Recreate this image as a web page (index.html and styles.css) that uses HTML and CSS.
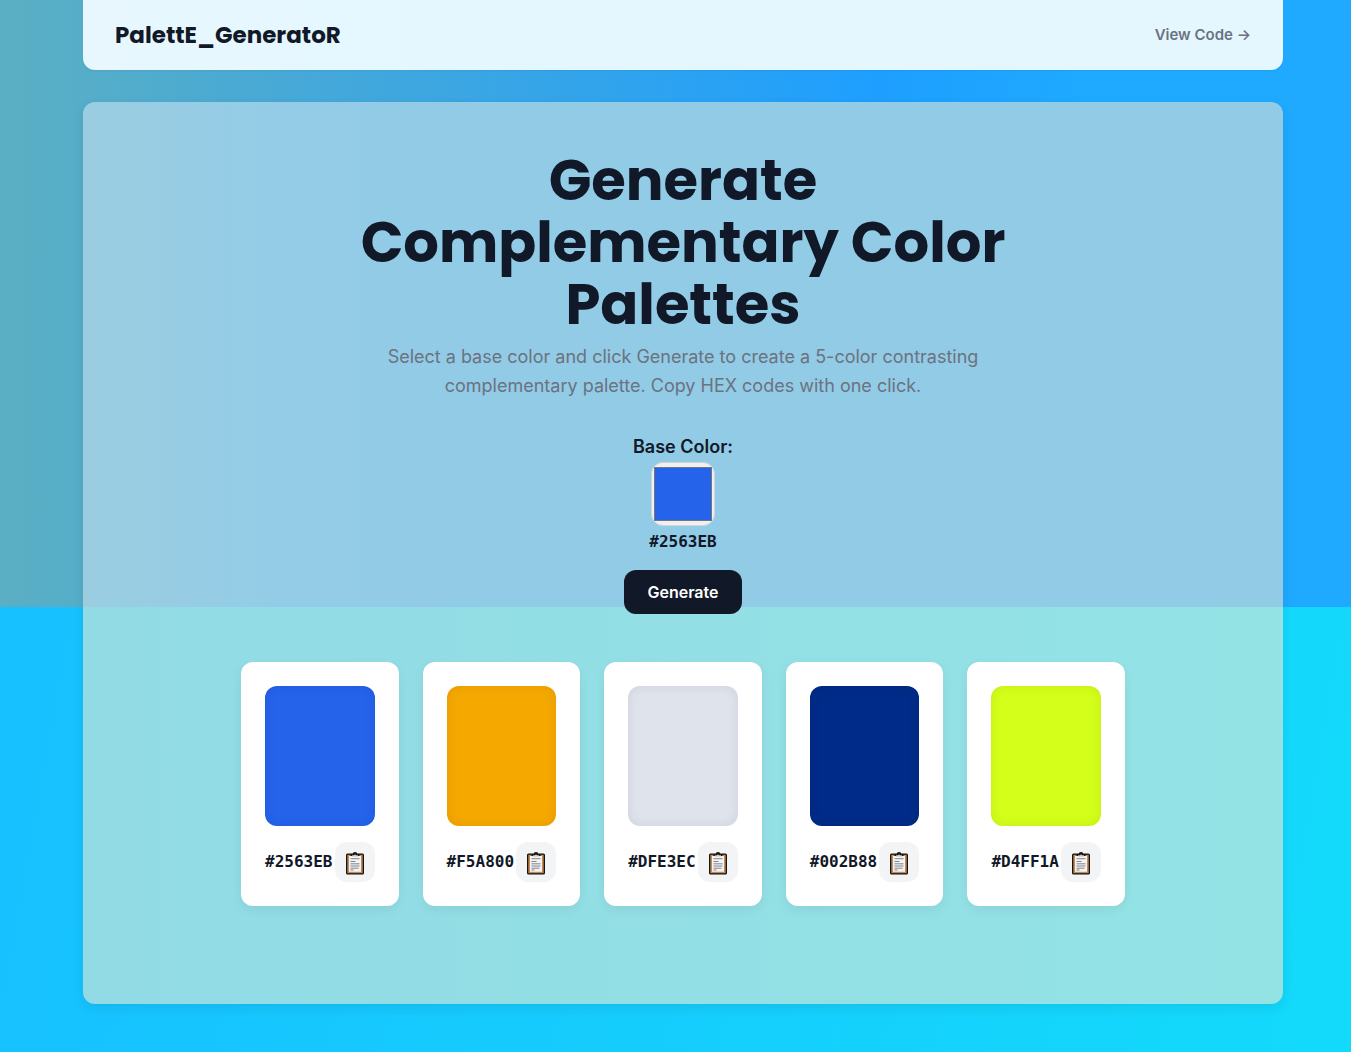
FILE: index.html
```html
<!DOCTYPE html>
<html lang="en">
<head>
<meta charset="utf-8">
<meta name="viewport" content="width=device-width, initial-scale=1">
<title>PalettE_GeneratoR</title>
<link rel="stylesheet" href="styles.css">
</head>
<body>
<svg class="sprite" aria-hidden="true">
  <symbol id="clipboard" viewBox="0 0 20 24">
    <rect x="1" y="2.500" width="18" height="21" rx="1.500" fill="#17130f"/>
    <rect x="2.300" y="3.800" width="15.400" height="18.400" fill="#c08a55"/>
    <rect x="4" y="5" width="12" height="15.800" fill="#f3f2f4"/>
    <path d="M5.500 5V3.200h2.200a2.300 2.300 0 0 1 4.600 0h2.200V5z" fill="#17130f"/>
    <path d="M7 5.600V4.200h1.800a1.300 1.300 0 0 1 2.400 0H13v1.400z" fill="#c9c4c1"/>
    <path d="M5.500 7.700h9M5.500 10.500h5M5.500 12.800h9M5.500 15h9M5.500 17.200h8M5.500 19h3" stroke="#85858a" stroke-width="1"/>
  </symbol>
</svg>
<div class="page">
  <header class="header">
    <span class="logo">PalettE_GeneratoR</span>
    <a class="code-link" href="#code">View Code →</a>
  </header>
  <main class="panel">
    <section class="hero">
      <h1 class="title">Generate Complementary Color Palettes</h1>
      <p class="lead">Select a base color and click Generate to create a 5-color contrasting complementary palette. Copy HEX codes with one click.</p>
    </section>
    <section class="controls">
      <label class="label" for="base">Base Color:</label>
      <input class="picker" id="base" type="color" value="#2563eb">
      <span class="hex current">#2563EB</span>
      <button class="generate" type="button">Generate</button>
    </section>
    <section class="palette">
      <article class="card"><div class="swatch blue"></div><div class="row"><span class="hex">#2563EB</span><button class="copy" type="button" aria-label="Copy #2563EB"><svg class="icon"><use href="#clipboard"/></svg></button></div></article>
      <article class="card"><div class="swatch amber"></div><div class="row"><span class="hex">#F5A800</span><button class="copy" type="button" aria-label="Copy #F5A800"><svg class="icon"><use href="#clipboard"/></svg></button></div></article>
      <article class="card"><div class="swatch mist"></div><div class="row"><span class="hex">#DFE3EC</span><button class="copy" type="button" aria-label="Copy #DFE3EC"><svg class="icon"><use href="#clipboard"/></svg></button></div></article>
      <article class="card"><div class="swatch navy"></div><div class="row"><span class="hex">#002B88</span><button class="copy" type="button" aria-label="Copy #002B88"><svg class="icon"><use href="#clipboard"/></svg></button></div></article>
      <article class="card"><div class="swatch lime"></div><div class="row"><span class="hex">#D4FF1A</span><button class="copy" type="button" aria-label="Copy #D4FF1A"><svg class="icon"><use href="#clipboard"/></svg></button></div></article>
    </section>
  </main>
</div>
</body>
</html>
```
FILE: styles.css
```css
* {
  box-sizing: border-box;
  margin: 0;
}

body {
  padding: 0 0 48px 15px;
  font-family: Inter, sans-serif;
  font-size: 16px;
  line-height: 26px;
  color: #111827;
  background:
    linear-gradient(90deg, #5bafc3 0%, #4aaad4 18%, #1e9fff 65%, #1fa9ff 80%, #1fa9ff 100%) 0 0 / 100% 607px no-repeat,
    linear-gradient(100deg, #17c1ff 10%, #13dafb 100%);
}

.sprite {
  display: none;
}

.page {
  max-width: 1200px;
  margin: 0 auto;
}

.header {
  display: flex;
  align-items: center;
  justify-content: space-between;
  height: 70px;
  padding: 0 32px;
  margin-bottom: 32px;
  border-radius: 0 0 12px 12px;
  background: linear-gradient(90deg, #e8f7fe, #e4f7ff 30%);
  box-shadow: 0 1px 3px rgba(0, 0, 0, 0.05);
}

.logo {
  font-family: Poppins, Inter, sans-serif;
  font-size: 23px;
  font-weight: 700;
}

.code-link {
  color: #6b7280;
  font-size: 15px;
  font-weight: 600;
  text-decoration: none;
}

.panel {
  padding: 48px 32px 98px;
  border-radius: 12px;
  background:
    linear-gradient(90deg, #9acde0 0%, #94cce7 16%, #92cbe6 30%, #92cbe6 100%) 0 0 / 100% 505px no-repeat,
    linear-gradient(90deg, #92dbe5, #93e3e5);
  box-shadow: 0 4px 12px rgba(0, 0, 0, 0.08);
}

.hero {
  max-width: 700px;
  margin: 0 auto 32px;
  text-align: center;
}

.title {
  margin-bottom: 6px;
  font-family: Poppins, Inter, sans-serif;
  font-size: 56px;
  font-weight: 700;
  line-height: 62px;
}

.lead {
  max-width: 600px;
  margin: 0 auto;
  font-size: 18px;
  line-height: 29px;
  color: #6b7280;
}

.controls {
  display: flex;
  flex-direction: column;
  align-items: center;
  margin-bottom: 48px;
}

.label {
  font-size: 18px;
  font-weight: 600;
  line-height: 30px;
}

.picker {
  width: 64px;
  height: 64px;
  padding: 0;
  border: 1px solid #d1d5db;
  border-radius: 12px;
  background: #f0f0f0;
}

.hex {
  font-family: "DejaVu Sans Mono", monospace;
  font-weight: 700;
}

.current {
  line-height: 32px;
}

.generate {
  height: 44px;
  padding: 0 23px;
  margin-top: 12px;
  border: 0;
  border-radius: 12px;
  background: #111827;
  color: #fff;
  font-family: inherit;
  font-size: 16px;
  font-weight: 600;
}

.palette {
  display: grid;
  grid-template-columns: repeat(5, 1fr);
  gap: 24px;
  max-width: 884px;
  margin: 0 auto;
}

.card {
  padding: 24px;
  border-radius: 12px;
  background: #fff;
  box-shadow: 0 4px 12px rgba(0, 0, 0, 0.06);
}

.swatch {
  height: 140px;
  margin-bottom: 16px;
  border-radius: 12px;
  box-shadow: inset 0 0 12px rgba(0, 0, 0, 0.08);
}

.blue { background: #2563eb; }
.amber { background: #f5a800; }
.mist { background: #dfe3ec; }
.navy { background: #002b88; }
.lime { background: #d4ff1a; }

.row {
  display: flex;
  align-items: center;
  justify-content: space-between;
}

.copy {
  display: grid;
  place-items: center;
  flex: none;
  width: 40px;
  height: 40px;
  padding: 2px 0 0;
  border: 0;
  border-radius: 12px;
  background: #f3f4f6;
}

.icon {
  display: block;
  width: 20px;
  height: 24px;
}
```
